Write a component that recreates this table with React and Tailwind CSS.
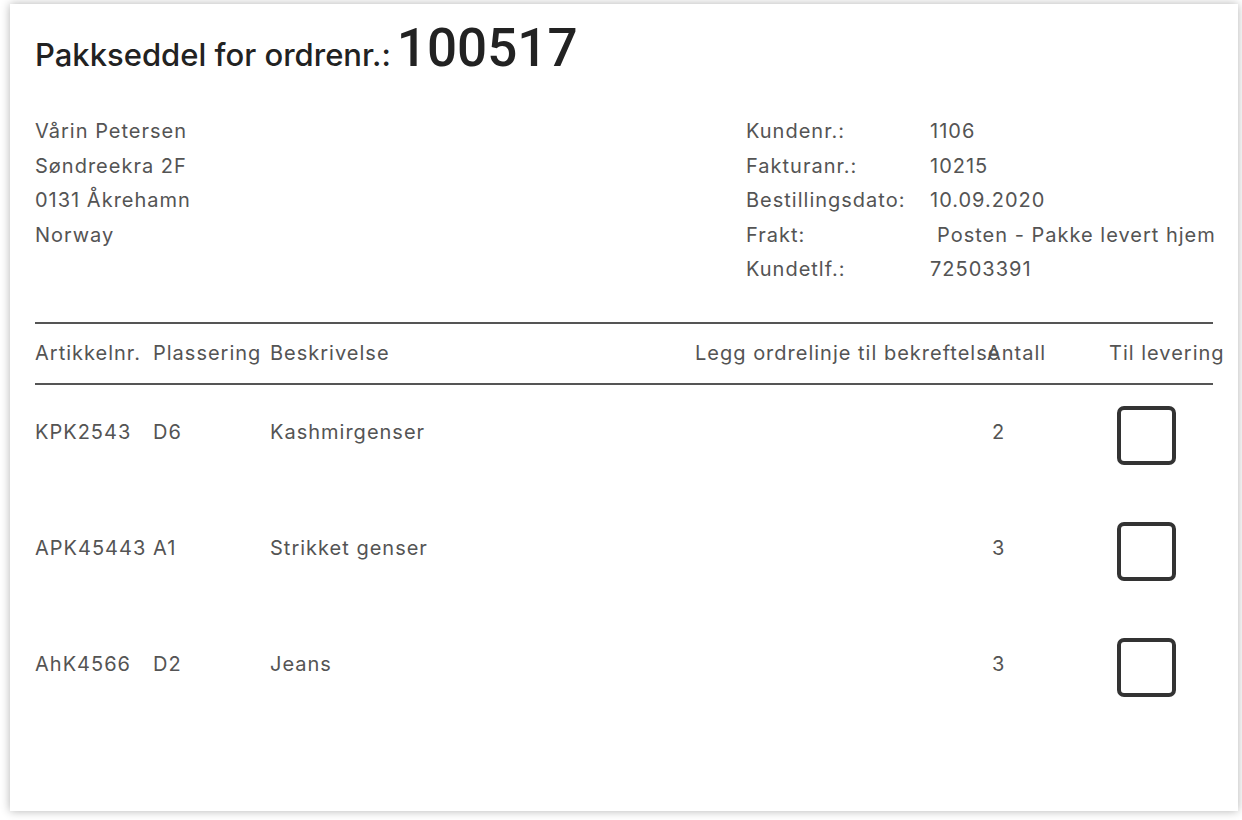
const ADDRESS = ["Vårin Petersen", "Søndreekra 2F", "0131 Åkrehamn", "Norway"];

const INFO = [
  { label: "Kundenr.:", value: "1106" },
  { label: "Fakturanr.:", value: "10215" },
  { label: "Bestillingsdato:", value: "10.09.2020" },
  { label: "Frakt:", value: "Posten - Pakke levert hjem", indent: true },
  { label: "Kundetlf.:", value: "72503391" },
];

const LINES = [
  { art: "KPK2543", place: "D6", desc: "Kashmirgenser", qty: 2 },
  { art: "APK45443", place: "A1", desc: "Strikket genser", qty: 3 },
  { art: "AhK4566", place: "D2", desc: "Jeans", qty: 3 },
];

const cols = "grid grid-cols-[118px_117px_425px_295px_119px_1fr]";

export default function App() {
  return (
    <div className="w-[1242px] h-[820px] bg-white pl-[10px] pt-[4px] pr-[4px] pb-[9px] overflow-hidden"
      style={{ fontFamily: "Inter, 'Noto Sans', sans-serif" }}>
      <div className="h-full bg-white shadow-[0_0_9px_rgba(0,0,0,0.3)] pl-[25px] pr-[25px] pt-[18px]">

        {/* Title */}
        <h1 className="flex items-baseline text-[#222] h-[60px] whitespace-nowrap">
          <span className="text-[31px] font-medium mr-[6px]">Pakkseddel for ordrenr.:</span>
          <span className="text-[53px] font-medium leading-none" style={{ fontFamily: "Roboto, sans-serif" }}>100517</span>
        </h1>

        {/* Customer + order info */}
        <div className="flex justify-between mt-[32px] text-[20px] tracking-[0.05em] leading-[34.5px] text-[#545454]">
          <div>
            {ADDRESS.map(l => <div key={l}>{l}</div>)}
          </div>
          <div className="w-[467px]">
            {INFO.map(r => (
              <div key={r.label} className="flex">
                <span className="w-[184px] shrink-0">{r.label}</span>
                <span className={`whitespace-nowrap ${r.indent ? "ml-[7px]" : ""}`}>{r.value}</span>
              </div>
            ))}
          </div>
        </div>

        {/* Order lines */}
        <div className="mt-[35px] w-[1178px] text-[20px] tracking-[0.05em] text-[#545454]">
          <div className={`${cols} h-[63px] items-center border-y-2 border-[#555] whitespace-nowrap`}>
            <span>Artikkelnr.</span>
            <span>Plassering</span>
            <span>Beskrivelse</span>
            <span>Legg ordrelinje til bekreftelse</span>
            <span className="-ml-[3px]">Antall</span>
            <span>Til levering</span>
          </div>

          {LINES.map(l => (
            <div key={l.art} className={`${cols} h-[116px] items-start whitespace-nowrap`}>
              <span className="mt-[32px]">{l.art}</span>
              <span className="mt-[32px]">{l.place}</span>
              <span className="mt-[32px]">{l.desc}</span>
              <span />
              <span className="mt-[32px] pl-[2px]">{l.qty}</span>
              <span className="mt-[21px] pl-[8px]">
                <span className="block w-[59px] h-[59px] border-[4.5px] border-[#333] rounded-[7px]" />
              </span>
            </div>
          ))}
        </div>
      </div>
    </div>
  );
}
